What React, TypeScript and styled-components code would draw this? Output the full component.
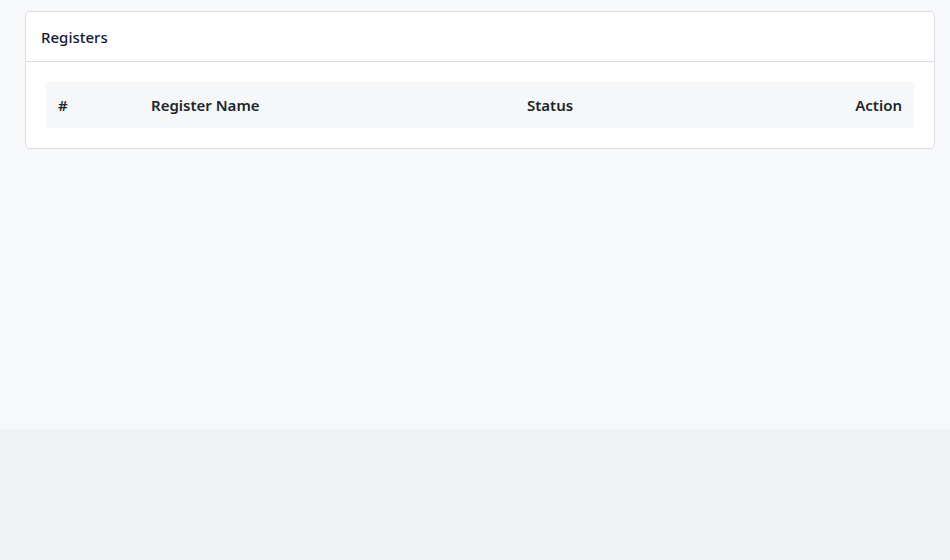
import React from 'react';
import styled, { createGlobalStyle } from 'styled-components';

const GlobalStyle = createGlobalStyle`
  html, body {
    margin: 0;
    padding: 0;
    background: #f1f2f6;
    font-family: 'Noto Sans', 'Open Sans', sans-serif;
  }
`;

const Main = styled.main`
  background: #f7f8fa;
  min-height: 429px;
  padding: 11px 15px 0 25px;
  box-sizing: border-box;
`;

const Card = styled.section`
  background: #fff;
  border: 1px solid #d9dce3;
  border-radius: 5px;
`;

const CardHeader = styled.header`
  height: 49px;
  display: flex;
  align-items: center;
  padding: 0 15px;
  border-bottom: 1px solid #d9dce3;
`;

const Title = styled.h2`
  margin: 0;
  font-size: 15px;
  font-weight: 500;
  color: #141a33;
`;

const CardBody = styled.div`
  padding: 20px;
`;

const Table = styled.table`
  width: 100%;
  border-collapse: collapse;
  table-layout: fixed;
`;

const HeadCell = styled.th<{ width?: number; align?: 'left' | 'right' }>`
  box-sizing: border-box;
  height: 46px;
  padding: 0 12px;
  background: #f6f7f9;
  text-align: ${(props) => props.align || 'left'};
  width: ${(props) => (props.width ? `${props.width}px` : 'auto')};
  font-size: 15px;
  font-weight: 600;
  color: #212529;
  white-space: nowrap;
`;

const columns = [
  { label: '#', width: 93 },
  { label: 'Register Name', width: 376 },
  { label: 'Status' },
  { label: 'Action', align: 'right' as const },
];

export default function App() {
  return (
    <>
      <GlobalStyle />
      <Main>
        <Card>
          <CardHeader>
            <Title>Registers</Title>
          </CardHeader>
          <CardBody>
            <Table>
              <thead>
                <tr>
                  {columns.map((col) => (
                    <HeadCell key={col.label} width={col.width} align={col.align}>
                      {col.label}
                    </HeadCell>
                  ))}
                </tr>
              </thead>
              <tbody />
            </Table>
          </CardBody>
        </Card>
      </Main>
    </>
  );
}
